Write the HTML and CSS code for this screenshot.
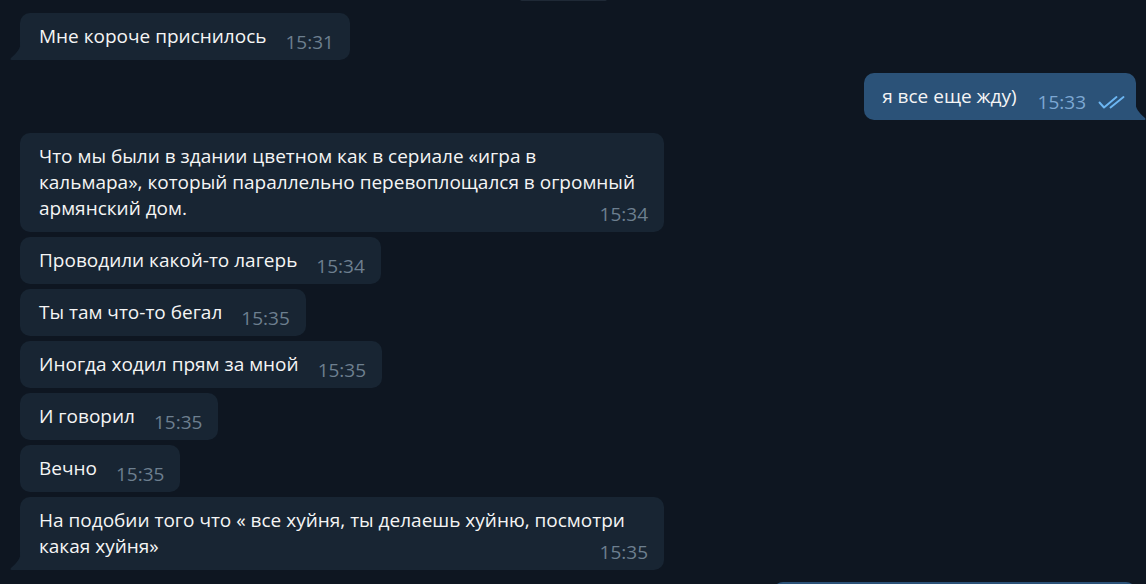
FILE: index.html
```html
<!DOCTYPE html>
<html lang="ru">

<head>
    <meta charset="UTF-8">
    <meta name="viewport" content="width=device-width, initial-scale=1.0">
    <title>Чат</title>
    <link rel="stylesheet" href="styles.css">
</head>

<body>

    <div class="history">

        <div class="service-edge"></div>

        <div class="msg in tail">
            <span class="text">Мне короче приснилось</span><span class="meta"><span class="time">15:31</span></span>
            <svg class="tail-in" width="11" height="18" viewBox="0 0 11 18"><path d="M11 0 V18 H1.5 C0.3 18 0 16.8 1 16 C7 11 10.5 6 11 0 Z" fill="#182533"/></svg>
        </div>

        <div class="msg out tail">
            <span class="text">я все еще жду)</span><span class="meta"><span class="time">15:33</span><svg class="checks" width="28" height="14" viewBox="0 0 28 14"><path d="M1.5 7.5 L6 12.5 L18.5 2 M12.5 12.5 L25.5 2" fill="none" stroke="#6cb6f2" stroke-width="1.9" stroke-linecap="round" stroke-linejoin="round"/></svg></span>
            <svg class="tail-out" width="11" height="18" viewBox="0 0 11 18"><path d="M0 0 V18 H9.5 C10.7 18 11 16.8 10 16 C4 11 0.5 6 0 0 Z" fill="#2b5278"/></svg>
        </div>

        <div class="msg in multi">
            <span class="text">Что мы были в здании цветном как в сериале «игра в<br>кальмара», который параллельно перевоплощался в огромный<br>армянский дом.</span><span class="meta"><span class="time">15:34</span></span>
        </div>

        <div class="msg in">
            <span class="text">Проводили какой-то лагерь</span><span class="meta"><span class="time">15:34</span></span>
        </div>

        <div class="msg in">
            <span class="text">Ты там что-то бегал</span><span class="meta"><span class="time">15:35</span></span>
        </div>

        <div class="msg in">
            <span class="text">Иногда ходил прям за мной</span><span class="meta"><span class="time">15:35</span></span>
        </div>

        <div class="msg in">
            <span class="text">И говорил</span><span class="meta"><span class="time">15:35</span></span>
        </div>

        <div class="msg in">
            <span class="text">Вечно</span><span class="meta"><span class="time">15:35</span></span>
        </div>

        <div class="msg in multi tail">
            <span class="text">На подобии того что « все хуйня, ты делаешь хуйню, посмотри<br>какая хуйня»</span><span class="meta"><span class="time">15:35</span></span>
            <svg class="tail-in" width="11" height="18" viewBox="0 0 11 18"><path d="M11 0 V18 H1.5 C0.3 18 0 16.8 1 16 C7 11 10.5 6 11 0 Z" fill="#182533"/></svg>
        </div>

        <div class="msg out next-out"></div>

    </div>

</body>

</html>
```

FILE: styles.css
```css
body {
    margin: 0;
    background-color: #0e1621;
    font-family: 'Open Sans', 'Noto Sans', sans-serif;
    color: #f5f5f5;
    overflow: hidden;
    height: 584px;
}

.history {
    display: flex;
    flex-direction: column;
    align-items: flex-start;
    gap: 5px;
    padding: 0 10px 0 20px;
}

/* bottom edge of the date badge that is scrolled away */
.service-edge {
    margin-left: 500px;
    width: 87px;
    height: 2px;
    margin-top: -1px;
    margin-bottom: 7px;
    background-color: #1f2936;
    border-radius: 0 0 6px 6px;
}

.msg {
    position: relative;
    display: flow-root;
    box-sizing: border-box;
    max-width: 644px;
    padding: 10px 16px 11px 19px;
    border-radius: 10px;
    font-size: 19px;
    line-height: 26px;
}

.msg.in {
    background-color: #182533;
}

.msg.out {
    align-self: flex-end;
    background-color: #2b5278;
    margin-top: 8px;
    margin-bottom: 8px;
    padding-left: 18px;
    padding-right: 10px;
}

.msg.out .meta {
    margin-left: 21px;
}

.msg.multi {
    width: 644px;
}

.msg.multi .text {
    white-space: nowrap;
}

/* time (and ticks) float to the right end of the last line */
.meta {
    float: right;
    display: flex;
    align-items: center;
    height: 20px;
    padding-top: 9px;
    margin-bottom: -3px;
    margin-left: 19px;
}

.time {
    font-size: 19px;
    line-height: 20px;
    color: #6d7f8f;
}

.msg.out .time {
    color: #7da8d3;
}

.checks {
    margin-left: 12px;
}

.msg.tail.in {
    border-bottom-left-radius: 0;
}

.msg.tail.out {
    border-bottom-right-radius: 0;
}

.tail-in {
    position: absolute;
    left: -10px;
    bottom: 0;
}

.tail-out {
    position: absolute;
    right: -10px;
    bottom: 0;
}

.msg.next-out {
    width: 363px;
    height: 20px;
    padding: 0;
    margin-top: 7px;
}
```
